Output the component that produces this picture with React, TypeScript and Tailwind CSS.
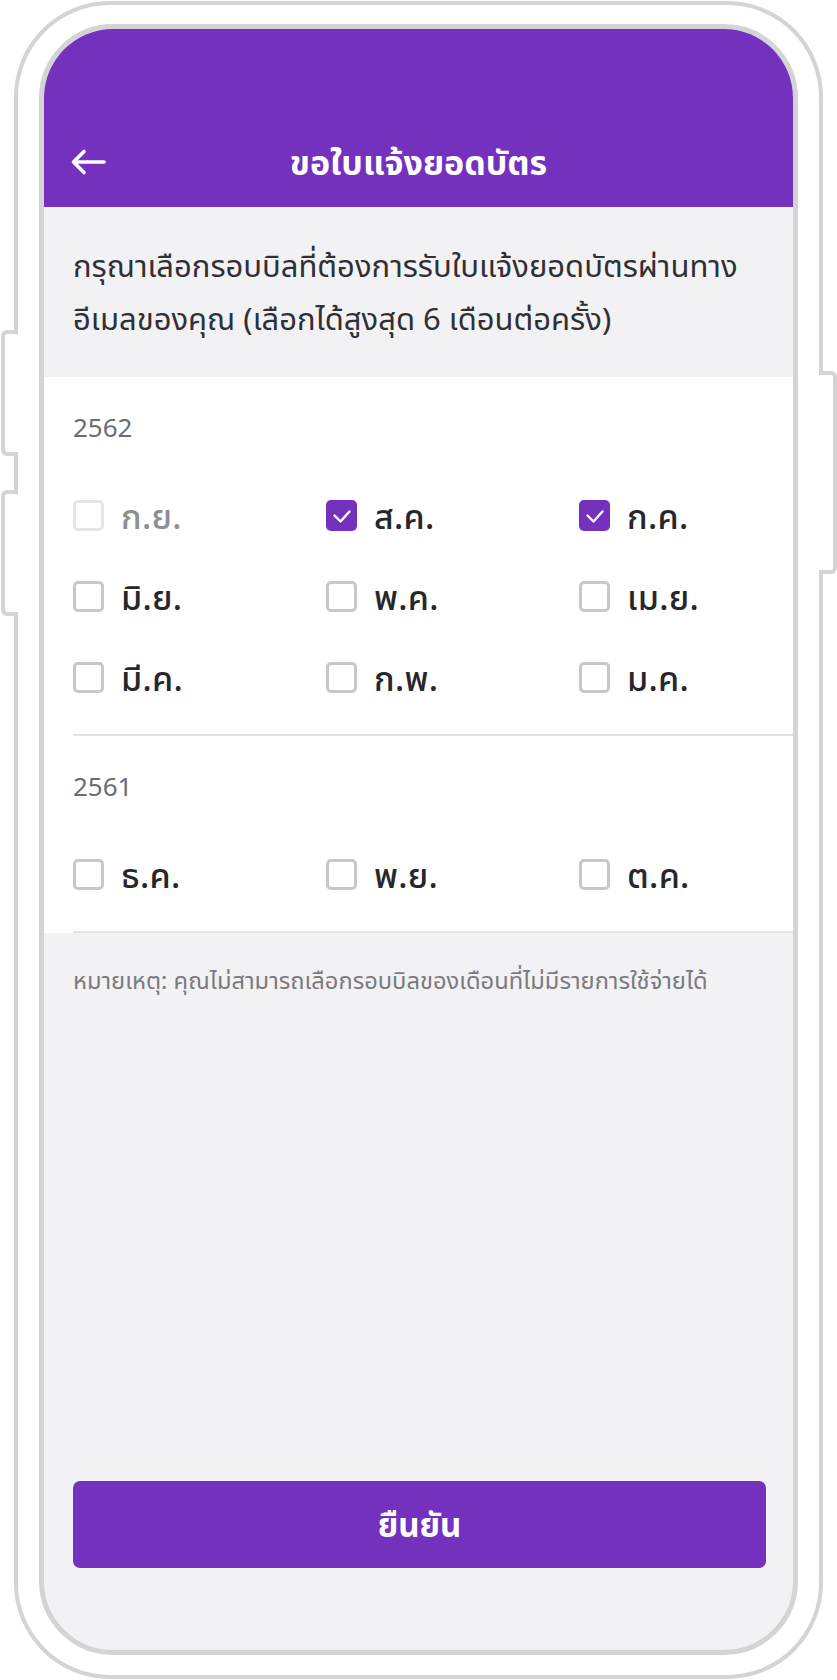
import { useState } from "react";

type Month = {
  label: string;
  checked?: boolean;
  disabled?: boolean;
};

type YearGroup = {
  year: string;
  months: Month[];
};

const groups: YearGroup[] = [
  {
    year: "2562",
    months: [
      { label: "ก.ย.", disabled: true },
      { label: "ส.ค.", checked: true },
      { label: "ก.ค.", checked: true },
      { label: "มิ.ย." },
      { label: "พ.ค." },
      { label: "เม.ย." },
      { label: "มี.ค." },
      { label: "ก.พ." },
      { label: "ม.ค." },
    ],
  },
  {
    year: "2561",
    months: [{ label: "ธ.ค." }, { label: "พ.ย." }, { label: "ต.ค." }],
  },
];

const font = "font-['Noto_Sans','Noto_Sans_Thai','Liberation_Sans',sans-serif]";

function Checkbox({ checked, disabled }: { checked: boolean; disabled?: boolean }) {
  if (checked) {
    return (
      <span className="block size-[31px] shrink-0 rounded-[5px] bg-[#7331be]">
        <svg width="31" height="31" viewBox="0 0 31 31" fill="none">
          <path d="M8.5 15.5l6 6 9-10" stroke="white" strokeWidth="2.4" strokeLinecap="round" strokeLinejoin="round" />
        </svg>
      </span>
    );
  }
  return (
    <span
      className={`block size-[31px] shrink-0 rounded-[5px] border-[3px] bg-white ${
        disabled ? "border-[#e6e6e9]" : "border-[#c8c7cc]"
      }`}
    />
  );
}

function MonthItem({ month }: { month: Month }) {
  const [checked, setChecked] = useState(!!month.checked);
  return (
    <button
      type="button"
      disabled={month.disabled}
      onClick={() => setChecked((c) => !c)}
      className="flex h-[81px] items-center gap-[17px] text-left"
    >
      <Checkbox checked={checked} disabled={month.disabled} />
      <span
        className={`text-[34px] font-medium leading-none tracking-[0.3px] ${
          month.disabled ? "text-[#8e8e93]" : "text-[#27272b]"
        }`}
      >
        {month.label}
      </span>
    </button>
  );
}

export default function App() {
  return (
    <div className={`relative h-[1680px] w-[837px] overflow-hidden bg-white ${font}`}>
      {/* side buttons */}
      <div className="absolute left-[1px] top-[330px] h-[126px] w-[17px] rounded-l-[6px] border-4 border-r-0 border-[#d4d4d6] bg-white" />
      <div className="absolute left-[1px] top-[490px] h-[126px] w-[17px] rounded-l-[6px] border-4 border-r-0 border-[#d4d4d6] bg-white" />
      <div className="absolute right-0 top-[371px] h-[203px] w-[18px] rounded-r-[6px] border-4 border-l-0 border-[#d4d4d6] bg-white" />

      <div className="ml-[14px] mt-[1px] h-[1678px] w-[809px] rounded-[96px] border-4 border-[#d4d4d6] px-[21px] pb-[20px] pt-[19px]">
        <div className="flex h-full flex-col overflow-hidden rounded-[74px] border-[5px] border-[#d4d4d6] bg-[#f2f2f4]">
          {/* header */}
          <header className="h-[178px] shrink-0 bg-[#7331be] pt-[105px]">
            <div className="relative flex h-[56px] items-center justify-center">
              <svg
                className="absolute left-[26px] top-[14px]"
                width="38"
                height="28"
                viewBox="0 0 38 28"
                fill="none"
              >
                <path
                  d="M34 14H4M14 3.5L3.5 14 14 24.5"
                  stroke="white"
                  strokeWidth="3.6"
                  strokeLinecap="round"
                  strokeLinejoin="round"
                />
              </svg>
              <h1 className="text-[34px] font-bold leading-none text-white">ขอใบแจ้งยอดบัตร</h1>
            </div>
          </header>

          {/* description */}
          <p className="whitespace-nowrap py-[32px] pl-[29px] pr-[8px] text-[31px] leading-[53px] text-[#303034]">
            กรุณาเลือกรอบบิลที่ต้องการรับใบแจ้งยอดบัตรผ่านทาง
            <br />
            อีเมลของคุณ (เลือกได้สูงสุด 6 เดือนต่อครั้ง)
          </p>

          {/* month list */}
          <section className="bg-white">
            {groups.map((g) => (
              <div key={g.year}>
                <div className="pb-[16px] pl-[29px] pt-[35px]">
                  <p className="h-[30px] text-[26px] leading-[30px] text-[#6c6c72]">{g.year}</p>
                  <div className="mt-[33px] grid grid-cols-[253px_253px_1fr]">
                    {g.months.map((m) => (
                      <MonthItem key={m.label} month={m} />
                    ))}
                  </div>
                </div>
                <div className="ml-[29px] h-[2px] bg-[#e4e4e7]" />
              </div>
            ))}
          </section>

          <p className="whitespace-nowrap px-[29px] pt-[33px] text-[23.7px] leading-[28px] text-[#7a7a80]">
            หมายเหตุ: คุณไม่สามารถเลือกรอบบิลของเดือนที่ไม่มีรายการใช้จ่ายได้
          </p>

          <button
            type="button"
            className="mb-[82px] ml-[29px] mr-[27px] mt-auto h-[87px] shrink-0 rounded-[7px] bg-[#7331be] text-[33px] font-bold text-white"
          >
            ยืนยัน
          </button>
        </div>
      </div>
    </div>
  );
}
